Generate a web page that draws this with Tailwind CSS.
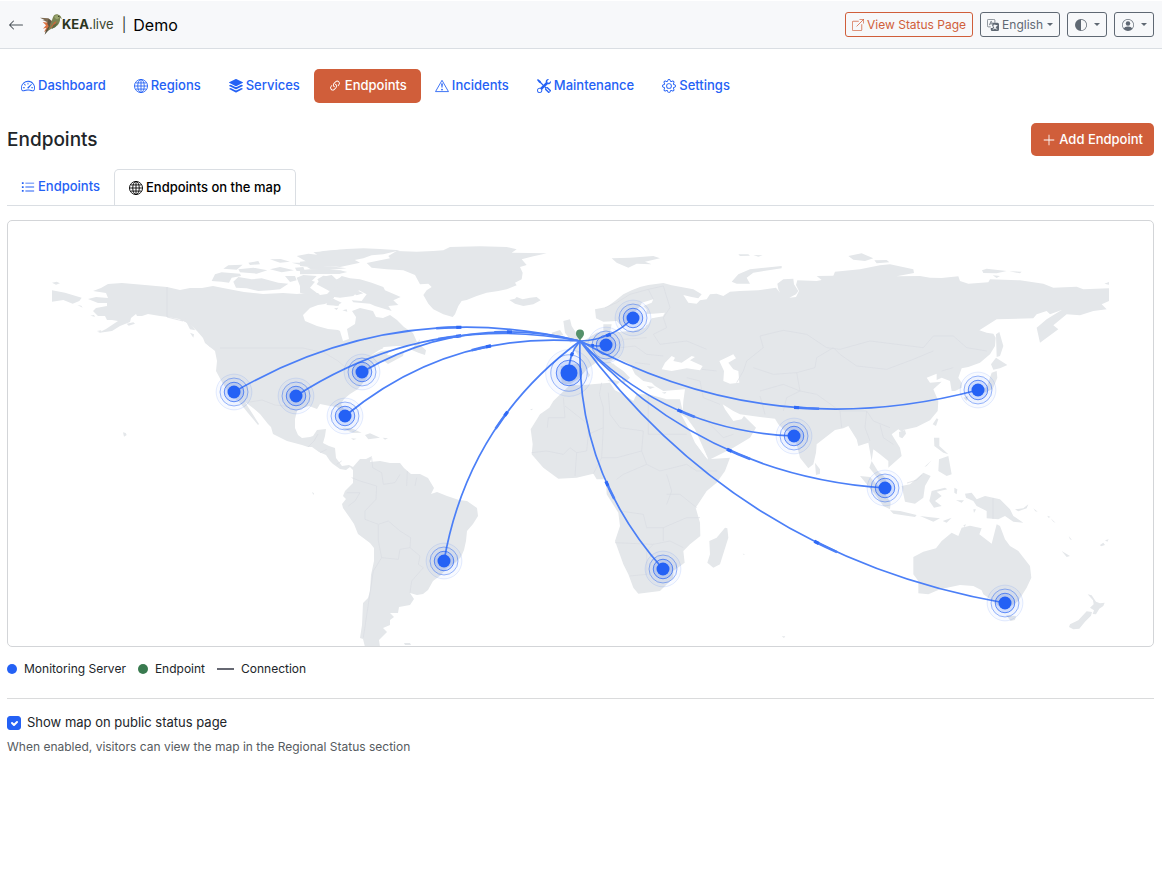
<!DOCTYPE html>
<html lang="en">

<head>
  <meta charset="utf-8">
  <meta name="viewport" content="width=device-width, initial-scale=1">
  <title>Demo - Endpoints</title>
  <script src="https://cdn.jsdelivr.net/npm/@tailwindcss/browser@4"></script>
</head>

<body class="bg-white font-['Inter',sans-serif] text-[13px] text-[#212529]">
  <!-- Icons -->
  <svg class="hidden">
    <symbol id="arrow-left" viewBox="0 0 16 16"><path fill-rule="evenodd" d="M15 8a.5.5 0 0 0-.5-.5H2.707l3.147-3.146a.5.5 0 1 0-.708-.708l-4 4a.5.5 0 0 0 0 .708l4 4a.5.5 0 0 0 .708-.708L2.707 8.500H14.500A.5.5 0 0 0 15 8"/></symbol>
    <symbol id="globe" viewBox="0 0 16 16"><g fill="none" stroke="currentColor"><circle cx="8" cy="8" r="7.500"/><ellipse cx="8" cy="8" rx="3.700" ry="7.500"/><path d="M8 .5v15M.5 8h15M1.700 4.500h12.600M1.700 11.500h12.600"/></g></symbol>
    <symbol id="speedometer" viewBox="0 0 16 16"><path d="M8 4a.5.5 0 0 1 .5.5V6a.5.5 0 0 1-1 0V4.500A.5.5 0 0 1 8 4M3.732 5.732a.5.5 0 0 1 .707 0l.915.914a.5.5 0 1 1-.708.708l-.914-.915a.5.5 0 0 1 0-.707M2 10a.5.5 0 0 1 .5-.5h1.586a.5.5 0 0 1 0 1H2.500A.5.5 0 0 1 2 10m9.500 0a.5.5 0 0 1 .5-.5h1.500a.5.5 0 0 1 0 1H12a.5.5 0 0 1-.5-.5m.754-4.246a.39.39 0 0 0-.527-.02L7.547 9.310a.91.91 0 1 0 1.302 1.258l3.434-4.297a.39.39 0 0 0-.029-.518z"/><path fill-rule="evenodd" d="M0 10a8 8 0 1 1 15.547 2.661c-.442 1.253-1.845 1.602-2.932 1.250C11.309 13.488 9.475 13 8 13c-1.474 0-3.310.488-4.615.911-1.087.352-2.490.003-2.932-1.250A8 8 0 0 1 0 10m8-7a7 7 0 0 0-6.603 9.329c.203.575.923.876 1.680.630C4.397 12.533 6.358 12 8 12s3.604.532 4.923.960c.757.245 1.477-.056 1.680-.631A7 7 0 0 0 8 3"/></symbol>
    <symbol id="stack" viewBox="0 0 16 16"><path d="m14.120 10.163 1.715.858c.220.110.220.424 0 .534L8.267 15.340a.6.6 0 0 1-.534 0L.165 11.555a.299.299 0 0 1 0-.534l1.716-.858 5.317 2.659c.505.252 1.100.252 1.604 0l5.317-2.660zM7.733.063a.6.6 0 0 1 .534 0l7.568 3.784a.3.3 0 0 1 0 .535L8.267 8.165a.6.6 0 0 1-.534 0L.165 4.382a.299.299 0 0 1 0-.535z"/><path d="m14.120 6.576 1.715.858c.220.110.220.424 0 .534l-7.568 3.784a.6.6 0 0 1-.534 0L.165 7.968a.299.299 0 0 1 0-.534l1.716-.858 5.317 2.659c.505.252 1.100.252 1.604 0z"/></symbol>
    <symbol id="link" viewBox="0 0 16 16"><path d="M4.715 6.542 3.343 7.914a3 3 0 1 0 4.243 4.243l1.828-1.829A3 3 0 0 0 8.586 5.500L8 6.086a1 1 0 0 0-.154.199 2 2 0 0 1 .861 3.337L6.880 11.450a2 2 0 1 1-2.830-2.830l.793-.792a4 4 0 0 1-.128-1.287z"/><path d="M6.586 4.672A3 3 0 0 0 7.414 9.500l.775-.776a2 2 0 0 1-.896-3.346L9.120 3.550a2 2 0 1 1 2.830 2.830l-.793.792c.112.420.155.855.128 1.287l1.372-1.372a3 3 0 1 0-4.243-4.243z"/></symbol>
    <symbol id="triangle" viewBox="0 0 16 16"><path fill="none" stroke="currentColor" stroke-linejoin="round" d="M8 1.500.6 14.400h14.800z"/><path d="M7.002 12a1 1 0 1 1 2 0 1 1 0 0 1-2 0M7.100 5.995a.905.905 0 1 1 1.800 0l-.350 3.507a.552.552 0 0 1-1.100 0z"/></symbol>
    <symbol id="tools" viewBox="0 0 16 16"><path d="M1 0 0 1l2.200 3.081a1 1 0 0 0 .815.419h.070a1 1 0 0 1 .708.293l2.675 2.675-2.617 2.654A3.003 3.003 0 0 0 0 13a3 3 0 1 0 5.878-.851l2.654-2.617.968.968-.305.914a1 1 0 0 0 .242 1.023l3.270 3.270a.997.997 0 0 0 1.414 0l1.586-1.586a.997.997 0 0 0 0-1.414l-3.270-3.270a1 1 0 0 0-1.023-.242L10.500 9.500l-.960-.960 2.680-2.643A3.005 3.005 0 0 0 16 3q0-.405-.102-.777l-2.140 2.141L12 4l-.364-1.757L13.777.102a3 3 0 0 0-3.675 3.680L7.462 6.460 4.793 3.793a1 1 0 0 1-.293-.707v-.071a1 1 0 0 0-.419-.814zm9.646 10.646a.5.5 0 0 1 .708 0l2.914 2.915a.5.5 0 0 1-.707.707l-2.915-2.914a.5.5 0 0 1 0-.708M3 11l.471.242.529.026.287.445.445.287.026.529L5 13l-.242.471-.026.529-.445.287-.287.445-.529.026L3 15l-.471-.242L2 14.732l-.287-.445L1.268 14l-.026-.529L1 13l.242-.471.026-.529.445-.287.287-.445.529-.026z"/></symbol>
    <symbol id="gear" viewBox="0 0 16 16"><path d="M8 4.754a3.246 3.246 0 1 0 0 6.492 3.246 3.246 0 0 0 0-6.492M5.754 8a2.246 2.246 0 1 1 4.492 0 2.246 2.246 0 0 1-4.492 0"/><path d="M9.796 1.343c-.527-1.790-3.065-1.790-3.592 0l-.094.319a.873.873 0 0 1-1.255.520l-.292-.160c-1.640-.892-3.433.902-2.540 2.541l.159.292a.873.873 0 0 1-.520 1.255l-.319.094c-1.790.527-1.790 3.065 0 3.592l.319.094a.873.873 0 0 1 .520 1.255l-.160.292c-.892 1.640.901 3.434 2.541 2.540l.292-.159a.873.873 0 0 1 1.255.520l.094.319c.527 1.790 3.065 1.790 3.592 0l.094-.319a.873.873 0 0 1 1.255-.520l.292.160c1.640.893 3.434-.902 2.540-2.541l-.159-.292a.873.873 0 0 1 .520-1.255l.319-.094c1.790-.527 1.790-3.065 0-3.592l-.319-.094a.873.873 0 0 1-.520-1.255l.160-.292c.893-1.640-.902-3.433-2.541-2.540l-.292.159a.873.873 0 0 1-1.255-.520zm-2.633.283c.246-.835 1.428-.835 1.674 0l.094.319a1.873 1.873 0 0 0 2.693 1.115l.291-.160c.764-.415 1.600.420 1.184 1.185l-.159.292a1.873 1.873 0 0 0 1.116 2.692l.318.094c.835.246.835 1.428 0 1.674l-.319.094a1.873 1.873 0 0 0-1.115 2.693l.160.291c.415.764-.420 1.600-1.185 1.184l-.291-.159a1.873 1.873 0 0 0-2.693 1.116l-.094.318c-.246.835-1.428.835-1.674 0l-.094-.319a1.873 1.873 0 0 0-2.692-1.115l-.292.160c-.764.415-1.600-.420-1.184-1.185l.159-.291A1.873 1.873 0 0 0 1.945 8.930l-.319-.094c-.835-.246-.835-1.428 0-1.674l.319-.094A1.873 1.873 0 0 0 3.060 4.377l-.160-.292c-.415-.764.420-1.600 1.185-1.184l.292.159a1.873 1.873 0 0 0 2.692-1.115z"/></symbol>
    <symbol id="list" viewBox="0 0 16 16"><path d="M5 3h10v1H5zM5 7.500h10v1H5zM5 12h10v1H5zM1 2.500h2v2H1zM1 7h2v2H1zM1 11.500h2v2H1z"/></symbol>
    <symbol id="plus" viewBox="0 0 16 16"><path d="M7.500 2h1v5.500H14v1H8.500V14h-1V8.500H2v-1h5.500z"/></symbol>
    <symbol id="external" viewBox="0 0 16 16"><path fill="none" stroke="currentColor" stroke-linecap="round" stroke-linejoin="round" d="M8.500 3H1.500a1 1 0 0 0-1 1v10.500a1 1 0 0 0 1 1H12a1 1 0 0 0 1-1V7.500M10.500.5h5v5M15.500.5 6.500 9.500"/></symbol>
    <symbol id="translate" viewBox="0 0 16 16"><path fill="none" stroke="currentColor" d="M5 10.500H2A1.500 1.500 0 0 1 .5 9V2A1.500 1.500 0 0 1 2 .5h7A1.500 1.500 0 0 1 10.500 2v3M3.200 8.200 5.300 3h.4l2.100 5.200M4 6.500h3"/><path fill-rule="evenodd" d="M7 5h7a2 2 0 0 1 2 2v7a2 2 0 0 1-2 2H7a2 2 0 0 1-2-2v-2h2.500l.5-1.500L7 9V8h3V7h1v1h3v1h-1c-.3 1.200-.9 2.200-1.600 3 .7.600 1.600 1 2.600 1.200l-.4.900c-1.200-.3-2.200-.8-3-1.500-.8.700-1.700 1.200-2.800 1.500l-.5-.9c1-.3 1.800-.7 2.500-1.200-.7-.8-1.200-1.800-1.500-3H9z"/></symbol>
    <symbol id="half" viewBox="0 0 16 16"><path d="M8 15A7 7 0 1 0 8 1zm0 1A8 8 0 1 1 8 0a8 8 0 0 1 0 16"/></symbol>
    <symbol id="person" viewBox="0 0 16 16"><path d="M11 6a3 3 0 1 1-6 0 3 3 0 0 1 6 0"/><path fill-rule="evenodd" d="M0 8a8 8 0 1 1 16 0A8 8 0 0 1 0 8m8-7a7 7 0 0 0-5.468 11.370C3.242 11.226 4.805 10 8 10s4.757 1.225 5.468 2.370A7 7 0 0 0 8 1"/></symbol>
    <symbol id="caret" viewBox="0 0 8 4"><path d="M0 0h8L4 4z"/></symbol>
  </svg>

  <!-- Header -->
  <header class="flex h-[49px] items-center justify-between border-t border-b border-t-white border-b-[#dadee3] bg-[#f7f8fa] px-2">
    <div class="flex items-center">
      <a href="#" aria-label="Back"><svg class="size-4 fill-[#495057]"><use href="#arrow-left"/></svg></a>
      <a href="#" class="ml-4 flex items-center" aria-label="KEA.live">
        <svg class="h-[21px] w-[22px]" viewBox="0 0 66 63">
          <path fill="#7d6a52" d="m0 11 25 2 12 9-3 12-17-11 5 1L7 18l8 1z"/>
          <path fill="#d9703f" d="m8 24 28 4-3 13-21 13 7-13-10 3 9-10z"/>
          <path fill="#5d5540" d="m26 14 7 7-2 13 4 5-12 13-9 10 3-12 9-13-4-8z"/>
          <path fill="#7b8553" d="M39 10C41 3 48-1 55 2c6 1 9 6 10 14l-5-5c2 14-7 28-26 33l-10 6 8-19c4-7 3-12 7-21z"/>
          <path fill="#9ba670" d="M43 8c4-5 9-5 13-3l2 7-6 4c-5-1-7-4-9-8z"/>
          <path fill="#c8683e" d="m43 24 7-2-8 14-13 8z"/>
          <path fill="#5f6c43" d="m54 26-8 13-11 6 5-12z"/>
          <circle cx="56" cy="7" r="2" fill="#29301d"/>
        </svg>
        <span class="text-[13px] text-[#3c462e]"><b class="font-bold text-[#2c361f]">KEA</b>.live</span>
      </a>
      <span class="ml-2 text-sm text-[#333]">|</span>
      <span class="ml-[7px] text-base text-black">Demo</span>
    </div>
    <div class="flex gap-[7px] text-xs">
      <a href="#" class="flex h-[25px] items-center gap-[3px] rounded-[3px] border border-[#d05e3a] px-[6px] text-[#d05e3a]"><svg class="size-3 fill-current"><use href="#external"/></svg>View Status Page</a>
      <button type="button" class="flex h-[25px] items-center gap-[3px] rounded-[3px] border border-[#5f6873] px-[6px] text-[#5f6873]"><svg class="size-3 fill-current"><use href="#translate"/></svg>English<svg class="ml-px h-[3px] w-[6px] fill-current"><use href="#caret"/></svg></button>
      <button type="button" aria-label="Theme" class="flex h-[25px] w-10 items-center justify-center gap-[7px] rounded-[3px] border border-[#5f6873] text-[#5f6873]"><svg class="size-3 fill-current"><use href="#half"/></svg><svg class="h-[3px] w-[6px] fill-current"><use href="#caret"/></svg></button>
      <button type="button" aria-label="Account" class="flex h-[25px] w-10 items-center justify-center gap-[7px] rounded-[3px] border border-[#5f6873] text-[#5f6873]"><svg class="size-3 fill-current"><use href="#person"/></svg><svg class="h-[3px] w-[6px] fill-current"><use href="#caret"/></svg></button>
    </div>
  </header>

  <main class="pt-5 pr-2 pl-[7px]">
    <!-- Main navigation -->
    <nav class="flex font-medium text-[#2461f5]">
      <a href="#" class="flex h-[34px] items-center gap-[3px] px-[14px]"><svg class="size-[14px] fill-current"><use href="#speedometer"/></svg>Dashboard</a>
      <a href="#" class="flex h-[34px] items-center gap-[3px] px-[14px]"><svg class="size-[14px] fill-current"><use href="#globe"/></svg>Regions</a>
      <a href="#" class="flex h-[34px] items-center gap-[3px] px-[14px]"><svg class="size-[14px] fill-current"><use href="#stack"/></svg>Services</a>
      <a href="#" class="flex h-[34px] items-center gap-[3px] rounded-[5px] bg-[#d05e3a] px-[14px] text-white"><svg class="size-[14px] fill-current"><use href="#link"/></svg>Endpoints</a>
      <a href="#" class="flex h-[34px] items-center gap-[3px] px-[14px]"><svg class="size-[14px] fill-current"><use href="#triangle"/></svg>Incidents</a>
      <a href="#" class="flex h-[34px] items-center gap-[3px] px-[14px]"><svg class="size-[14px] fill-current"><use href="#tools"/></svg>Maintenance</a>
      <a href="#" class="flex h-[34px] items-center gap-[3px] px-[14px]"><svg class="size-[14px] fill-current"><use href="#gear"/></svg>Settings</a>
    </nav>

    <div class="mt-5 flex items-center justify-between">
      <h1 class="pt-px text-[19px] font-medium">Endpoints</h1>
      <button type="button" class="flex h-[33px] items-center gap-[3px] rounded-[5px] bg-[#d05e3a] px-[11px] font-medium text-white"><svg class="size-[14px] fill-current"><use href="#plus"/></svg>Add Endpoint</button>
    </div>

    <!-- Tabs -->
    <div class="mt-[13px] flex border-b border-[#dadee3] font-medium">
      <a href="#" class="flex h-9 items-center gap-[3px] px-[14px] text-[#2461f5]"><svg class="size-[14px] fill-current"><use href="#list"/></svg>Endpoints</a>
      <a href="#" class="-mb-px flex h-9 items-center gap-[3px] rounded-t-[5px] border border-b-0 border-[#dadee3] bg-white px-[14px] text-black"><svg class="size-[14px] fill-current"><use href="#globe"/></svg>Endpoints on the map</a>
    </div>

    <!-- Map -->
    <div class="mt-[14px] overflow-hidden rounded-[5px] border border-[#d3d5d8]">
      <svg id="map" class="block w-full" viewBox="8 220 1145 425" role="img" aria-label="Endpoints on the map">
        <g class="fill-[#e4e7ea]">
          <!-- Americas -->
          <path d="M93 290 101 287 108 283 122 282 145 284 167 286 180 289 190 287 202 287 213 285 223 287 244 291 263 293 283 292 297 293 307 292 318 292 320 294 327 293 330 290 335 289 334 297 325 303 318 304 310 307 303 314 305 320 317 325 328 328 338 329 340 330 343 340 349 338 347 328 355 323 356 316 352 310 360 307 373 310 376 316 383 317 390 314 397 319 404 326 413 332 417 341 407 345 397 345 384 346 370 355 381 350 390 349 387 354 396 355 404 351 403 355 388 363 384 360 373 363 369 371 367 377 363 382 358 388 350 393 344 398 341 403 346 412 346 419 343 416 337 406 330 405 320 403 317 408 309 405 303 407 297 410 295 418 295 427 298 434 302 437 310 436 313 435 317 429 326 428 325 435 323 442 329 445 335 447 336 457 342 465 349 464 353 466 360 458 366 458 372 455 370 461 380 460 390 462 400 462 404 467 411 473 420 473 428 477 434 487 431 493 437 491 447 495 459 499 467 500 477 507 478 515 473 523 467 530 466 540 464 549 461 556 455 562 447 567 441 574 433 580 428 589 423 593 417 594 410 592 414 598 410 604 399 606 398 612 390 612 394 616 390 619 390 624 383 627 387 631 379 639 380 646 365 646 363 638 360 637 362 624 363 602 368 597 370 590 371 574 374 560 374 547 370 542 358 533 354 523 350 517 343 507 342 503 346 498 343 495 345 490 353 482 353 469 350 466 346 469 340 468 333 463 330 460 326 454 319 451 312 446 308 446 302 444 287 440 273 433 271 426 268 423 260 413 253 407 245 401 252 412 259 423 258 424 248 412 240 402 230 393 223 383 216 370 217 360 215 350 205 342 203 337 197 330 190 323 183 320 179 318 168 316 160 315 148 313 142 315 137 315 136 313 131 317 130 321 120 325 112 330 98 332 106 328 118 320 112 319 107 319 105 315 98 315 93 310 96 307 107 305 107 302 98 302 88 298 96 296 108 297 106 292z"/>
          <g transform="translate(40 230) scale(.33333)">
            <path d="M36 178 75 185 125 200 118 210 98 218 70 207 36 212zM36 155 50 152 60 157 48 161zM112 222 124 224 128 230zM151 254 162 252 165 257zM260 278 280 274 285 278 266 284zM170 300 184 298 182 304zM249 604 257 606 260 612 252 617zM420 262 432 258 450 275 466 298 450 295 440 275zM450 305 462 310 460 320zM495 332 510 335 530 355 510 348z"/>
            <path d="M515 150 525 130 545 124 600 128 603 135 575 140 567 155 545 152zM550 113 565 103 608 101 590 116zM595 115 640 110 682 118 650 128 600 124zM625 95 655 90 660 100 630 102zM690 85 722 84 750 92 720 95zM580 152 595 138 635 145 665 142 715 155 745 158 720 175 690 178 655 180 620 172 588 170zM690 115 720 108 762 118 725 124zM735 135 765 135 770 148 750 153zM755 95 785 95 780 101zM770 140 790 132 830 135 815 150 800 160 810 172 790 172 780 165zM770 75 805 68 865 75 845 94 800 92zM765 110 790 108 795 121 770 120zM805 123 855 116 905 119 900 128 820 128zM832 145 850 134 875 137 885 148 900 140 920 150 945 145 960 175 940 195 900 200 860 195 870 180 845 165zM855 215 870 205 900 215 895 225 880 222zM820 64 900 56 990 60 935 82 960 95 900 108 860 104 855 84zM800 107 870 106 920 112 860 118 815 116z"/>
          </g>
          <g transform="translate(300 230) scale(.33333)">
            <path d="M45 68 70 60 140 54 190 52 240 54 300 58 250 70 215 73 190 82 160 88 130 87 145 98 100 104 50 110 0 105 0 92 40 88 70 83 55 72zM0 118 30 115 120 118 142 123 120 128 0 130zM50 160 65 138 95 132 112 148 125 135 150 142 180 145 215 155 250 168 255 178 302 198 280 208 295 222 265 225 275 240 225 225 210 218 160 214 155 208 185 210 200 190 165 172 150 175 120 172 95 168 88 180zM0 160 20 145 45 152 30 170 50 185 40 195 0 185zM80 210 100 203 125 215 110 224 80 222zM155 185 175 180 190 187 170 193zM127 238 140 235 142 242zM102 232 115 230 110 237zM215 355 240 348 250 353 230 357zM337 358 345 340 360 325 358 340 378 358 375 372 355 365z"/>
            <path d="M200 96 270 82 265 75 290 60 350 62 400 60 430 58 450 48 540 46 620 48 650 55 635 65 740 67 700 76 665 85 680 102 660 108 668 125 665 145 645 155 650 163 620 175 595 180 560 185 530 195 500 207 485 210 475 225 465 250 458 258 430 250 400 235 385 218 370 192 380 178 395 168 385 158 360 160 345 132 310 118 260 115 215 110zM628 207 645 203 650 198 668 205 690 200 710 198 722 208 700 220 670 225 645 218zM125 590 155 592 185 605 160 606 135 596zM195 612 210 607 240 620 205 625zM153 622 170 623 160 627zM248 620 264 622 255 626zM36 783 42 787 40 792z"/>
          </g>
          <!-- Europe and Asia -->
          <g transform="translate(520 230) scale(.33333)">
            <path d="M225 235 260 228 285 210 310 190 335 178 360 168 385 162 430 156 455 163 520 175 545 190 535 202 515 198 490 192 505 215 530 218 540 208 560 205 570 190 590 188 610 195 630 182 660 180 715 178 768 170 780 185 775 175 772 158 790 145 820 143 822 160 835 180 828 190 808 200 828 198 837 180 828 162 832 148 890 150 905 147 890 135 940 134 945 122 1020 115 1080 103 1110 100 1180 115 1182 126 1130 136 1200 135 1230 140 1265 141 1315 136 1320 150 1345 158 1405 154 1410 145 1500 148 1570 158 1600 170 1670 167 1690 175 1767 172 1767 210 1745 220 1760 235 1720 240 1680 253 1640 250 1600 283 1615 295 1560 335 1550 290 1580 265 1625 237 1590 250 1580 240 1550 250 1540 262 1430 265 1378 298 1400 305 1420 308 1427 320 1425 345 1410 370 1380 395 1345 408 1325 412 1315 440 1325 455 1325 470 1305 480 1295 480 1290 450 1265 440 1250 447 1250 428 1220 440 1230 455 1265 452 1240 475 1255 510 1253 540 1230 568 1190 588 1150 597 1150 605 1135 595 1115 610 1140 650 1145 675 1105 710 1105 690 1080 670 1060 655 1055 690 1075 722 1092 735 1110 772 1090 765 1060 725 1048 710 1055 690 1045 635 1015 645 1010 625 985 585 970 592 945 597 890 640 888 665 880 700 865 712 840 680 830 640 815 600 795 600 775 580 765 563 720 558 660 550 640 540 608 520 615 535 640 570 665 565 672 555 708 590 690 620 640 650 565 688 548 650 520 600 487 555 490 510 495 475 430 480 405 465 395 455 370 450 345 430 330 400 290 380 270 392 310 420 330 440 310 458 305 440 265 420 235 390 200 415 180 440 150 460 125 458 122 405 165 400 185 395 172 370 155 345 190 330 230 305 250 300 250 280 275 280 270 305 330 300 375 290 390 262 430 253 435 245 380 250 365 220 330 260 310 290 290 270 250 272 228 262z"/>
            <path d="M130 270 150 265 155 285 168 305 180 325 150 335 145 318 135 305zM95 305 120 297 130 312 100 322zM275 82 330 80 400 75 420 82 375 92 395 100 350 98 325 110 290 95zM655 70 685 70 690 74 660 75zM700 72 728 73 715 77zM635 152 655 130 690 115 785 105 785 112 700 125 680 140 690 158 650 158zM985 75 1025 67 1060 82 1035 90 1000 86zM1063 88 1100 87 1108 94 1070 97zM1386 118 1400 113 1460 120 1430 127 1390 126zM1468 121 1505 122 1500 127zM1418 133 1440 135 1430 141zM1753 158 1767 153 1767 161zM1428 310 1438 303 1450 345 1440 375 1430 378zM1413 400 1428 380 1462 402 1440 412 1420 416zM1415 425 1430 420 1432 440 1418 475 1380 490 1370 485 1400 468zM1330 500 1345 495 1340 510zM1238 580 1250 562 1255 565 1248 585zM1137 603 1155 597 1158 608 1147 622 1138 618zM885 695 900 715 900 728 888 732zM1242 620 1258 620 1258 645 1285 670 1270 665 1243 645zM1213 708 1235 688 1220 705zM1257 685 1285 675 1295 730 1280 735 1255 720zM200 418 210 432 205 440zM262 448 280 446 300 452 290 462zM280 395 288 410 282 425zM425 485 440 482 435 488zM380 465 405 468 390 474zM30 535 38 533 36 538z"/>
            <!-- Africa -->
            <path d="M100 510 150 462 180 463 270 455 285 478 310 490 340 510 350 490 385 490 440 505 480 505 490 550 530 640 562 685 630 680 615 720 590 755 560 780 527 830 540 875 541 915 510 940 490 960 494 995 460 1020 460 1040 420 1080 355 1088 340 1070 325 1030 310 1000 285 930 300 885 295 845 260 790 258 745 230 745 220 728 170 740 115 743 70 710 35 670 38 640 32 595 60 550 88 530z"/>
            <path d="M615 890 622 892 625 920 600 1000 580 1010 562 995 570 970 568 930 590 920zM668 968 674 969 672 972z"/>
          </g>
          <!-- Oceania -->
          <g transform="translate(760 430) scale(.33333)">
            <path d="M460 378 490 362 528 352 545 330 575 305 595 315 605 290 630 284 665 292 658 310 695 338 710 280 720 285 735 325 750 345 775 360 810 405 814 440 800 470 775 510 745 530 720 528 685 500 670 490 665 478 640 465 600 462 540 475 505 490 475 487 475 450 460 430zM738 552 768 555 765 567 752 570zM300 135 330 138 370 180 392 215 390 235 370 225 345 190zM425 165 450 160 490 125 512 135 495 165 490 200 465 218 435 212zM390 238 420 240 470 252 465 258 400 248zM480 255 505 258 540 262 520 272zM548 270 575 260 560 275zM515 180 555 170 562 175 530 182 545 195 525 210 545 225 522 230 508 210zM583 170 592 175 590 190 583 185zM588 208 612 208 605 215zM615 188 635 185 650 205 675 195 720 205 750 235 760 255 790 275 760 272 735 255 715 265 680 262 680 240 650 225 640 210 618 200zM765 235 790 232 805 220 800 232 775 241zM820 232 833 242 826 241zM862 254 872 258 865 260zM872 262 887 276 880 272zM905 360 930 375 920 378zM926 315 936 327 930 325zM1020 342 1030 335 1035 342 1023 346zM1035 328 1046 325 1042 332zM983 490 995 493 1008 512 1020 517 1034 515 1030 525 1018 533 1008 550 998 549 1002 538 990 530 1001 520 999 508zM980 541 996 543 993 554 975 572 958 593 940 595 927 588 930 580 955 568zM65 616 76 616 72 621zM640 235 648 235 642 246zM610 283 618 280 614 288z"/>
          </g>
          <path d="M404 642 410 642 411 644 405 644z"/>
        </g>
        <!-- Inland seas -->
        <g class="fill-white" transform="translate(520 230) scale(.33333)">
          <path d="M425 415 435 395 455 375 465 380 460 390 485 395 515 375 525 378 510 388 548 405 540 418 500 412 455 420zM598 390 640 370 648 382 625 395 640 415 655 420 658 455 630 458 610 450 612 420zM483 550 500 560 525 595 545 640 565 685 555 675 525 635 505 590zM365 215 400 205 395 215 370 225 380 235 380 248 430 250 430 256 395 262 385 280 340 300 320 298 350 270z"/>
        </g>
        <!-- Country borders -->
        <g class="fill-none stroke-[#dadde2]" stroke-width=".7">
          <path d="M167 286V316L175 318 183 320M220 347H303L325 352 338 360 345 366M250 401 262 399 275 404 285 405 297 410M308 446 314 440 318 433"/>
          <g stroke-width="2">
            <path transform="translate(300 430) scale(.33333)" d="M215 80 218 110 245 125 250 160 285 155 300 130M322 120 320 165M350 140 345 165M155 140 180 150 230 165 228 205 195 240 195 265 235 280 265 270 300 300 332 320 330 350 360 375 355 400 370 410 335 450 330 485M140 185 180 185 165 210 145 225M235 282 235 330 245 380 220 420 205 520 190 620M245 380 295 385 300 355 330 350M60 65 80 55M110 100 125 90"/>
            <path transform="translate(520 230) scale(.33333)" d="M130 500 135 560 85 560 82 590M135 525 205 580 205 610 250 590 250 530 238 490 245 455M265 485 270 550 300 590 370 600M385 490 385 610 500 610M370 600 365 660 380 700M35 665 80 660 130 670 150 650 170 665 165 735M205 610 200 660 170 665M250 590 245 680 220 728M245 680 290 680 365 660M380 700 420 720 500 700 530 720 590 720M290 745 310 730 380 700M300 840 370 850 380 890 430 890 500 860 540 860M440 820 455 780 440 730M530 830 480 790 440 790M285 935 400 940 380 960 380 1030 330 1035M400 940 450 930 490 950M430 890 430 930"/>
            <path transform="translate(520 230) scale(.33333)" d="M255 230 290 215 330 190 385 175 430 165M385 175 400 205M430 165 450 230 430 260M430 260 440 290 400 310 420 340 500 330 560 355M200 330 210 350 240 365 260 360M270 310 280 340 250 360M300 350 345 345 380 370 430 375M290 345 310 325 380 320M345 395 390 400M500 440 540 450 550 500 600 520M545 415 590 420M650 455 670 420 680 390 730 350 720 315 790 298 860 310 920 350 960 355 1050 330 1170 345 1210 350 1240 315 1300 315 1340 350 1400 360M940 350 960 370 1010 405 1100 415 1180 385 1240 360M700 410 760 430 830 425 885 410 890 380 940 350M830 425 840 480 800 500 790 540M840 480 890 490 960 540 1040 540 1060 570 1110 590M1040 540 1035 590 1050 630M720 480 790 460 840 480M550 560 610 620 640 610M1080 580 1090 620 1120 640M960 540 965 590M720 495 735 550M1265 420 1300 410"/>
          </g>
          <path d="M993 497V518M907 482 917 479 922 474"/>
        </g>
        <g id="connections" class="fill-none stroke-[#4b7ff7]"></g>
        <g id="servers"></g>
        <path class="fill-[#55916b]" d="M580 340c-1-3-4-4-4-7.500a4 4 0 1 1 8 0c0 3.500-3 4.500-4 7.500z"/>
      </svg>
    </div>

    <!-- Legend -->
    <div class="mt-[14px] flex items-center text-xs leading-4">
      <span class="mr-[7px] size-[10px] rounded-full bg-[#2461f5]"></span>Monitoring Server
      <span class="mr-[7px] ml-3 size-[10px] rounded-full bg-[#397a4f]"></span>Endpoint
      <span class="mr-[7px] ml-3 h-[2px] w-[17px] bg-[#666872]"></span>Connection
    </div>

    <hr class="mt-[21px] border-[#dadbdc]">

    <div class="mt-[14px] flex items-center gap-[6px]">
      <span class="relative flex">
        <input id="public-map" type="checkbox" checked class="peer size-[14px] appearance-none rounded-[3px] border border-gray-300 checked:border-[#2461f5] checked:bg-[#2461f5]">
        <svg class="pointer-events-none absolute inset-0 hidden size-[14px] fill-none stroke-white peer-checked:block" viewBox="0 0 14 14"><path stroke-width="2" stroke-linecap="round" stroke-linejoin="round" d="m5 7 2 2 3-3"/></svg>
      </span>
      <label for="public-map">Show map on public status page</label>
    </div>
    <p class="mt-1 text-xs leading-5 text-[#565b60]">When enabled, visitors can view the map in the Regional Status section</p>
  </main>

  <script>
    const endpoint = { x: 580, y: 340 };

    // pos is how far the moving trail has come from the server to the endpoint
    const servers = [
      { x: 234, y: 391, r: 6.5, pos: 0.67 },
      { x: 296, y: 395, r: 6.5, pos: 0.6 },
      { x: 362, y: 371, r: 6.5, pos: 0.7 },
      { x: 345, y: 415, r: 6.5, pos: 0.65 },
      { x: 444, y: 560, r: 6.5, pos: 0.62 },
      { x: 569, y: 372, r: 8.5, pos: 0.6 },
      { x: 606, y: 344, r: 6.5, pos: 0.55 },
      { x: 633, y: 317, r: 6.5, pos: 0.55 },
      { x: 663, y: 568, r: 6.5, pos: 0.42 },
      { x: 794, y: 435, r: 6.5, pos: 0.5 },
      { x: 885, y: 487, r: 6.5, pos: 0.47 },
      { x: 978, y: 389, r: 6.5, pos: 0.45 },
      { x: 1005, y: 602, r: 6.5, pos: 0.39 },
    ];

    function control(s) {
      return {
        x: (s.x + endpoint.x) / 2 - (s.y - endpoint.y) * 0.2,
        y: (s.y + endpoint.y) / 2 - (endpoint.x - s.x) * 0.2,
      };
    }

    function point(s, c, t) {
      const a = (1 - t) * (1 - t), b = 2 * t * (1 - t), d = t * t;
      return `${a * s.x + b * c.x + d * endpoint.x} ${a * s.y + b * c.y + d * endpoint.y}`;
    }

    document.getElementById('connections').innerHTML = servers.map(function (s) {
      const c = control(s);
      const length = Math.hypot(s.x - endpoint.x, s.y - endpoint.y);
      const tail = Math.min(0.08, 25 / length);
      const head = Math.min(0.1, 5 / length);
      return `
        <path stroke-width="1.7" d="M${s.x} ${s.y}Q${c.x} ${c.y} ${endpoint.x} ${endpoint.y}"/>
        <path stroke-width="2.6" d="M${point(s, c, s.pos - tail)}L${point(s, c, s.pos - tail / 2)}L${point(s, c, s.pos)}"/>
        <path class="stroke-[#2f69f6]" stroke-width="3.2" d="M${point(s, c, s.pos - head)}L${point(s, c, s.pos)}"/>
      `;
    }).join('');

    document.getElementById('servers').innerHTML = servers.map(function (s) {
      return `
        <g class="stroke-[#2461f5]" transform="translate(${s.x} ${s.y})">
          <circle class="fill-[#2461f5]/3" stroke-opacity=".12" r="${s.r * 2.75}"/>
          <circle class="fill-[#2461f5]/5" stroke-opacity=".45" r="${s.r * 2.15}"/>
          <circle class="fill-[#2461f5]/15" stroke-opacity=".7" r="${s.r * 1.5}"/>
          <circle class="fill-[#2461f5]" stroke="none" stroke-width="0" r="${s.r}"/>
        </g>
      `;
    }).join('');
  </script>
</body>

</html>
